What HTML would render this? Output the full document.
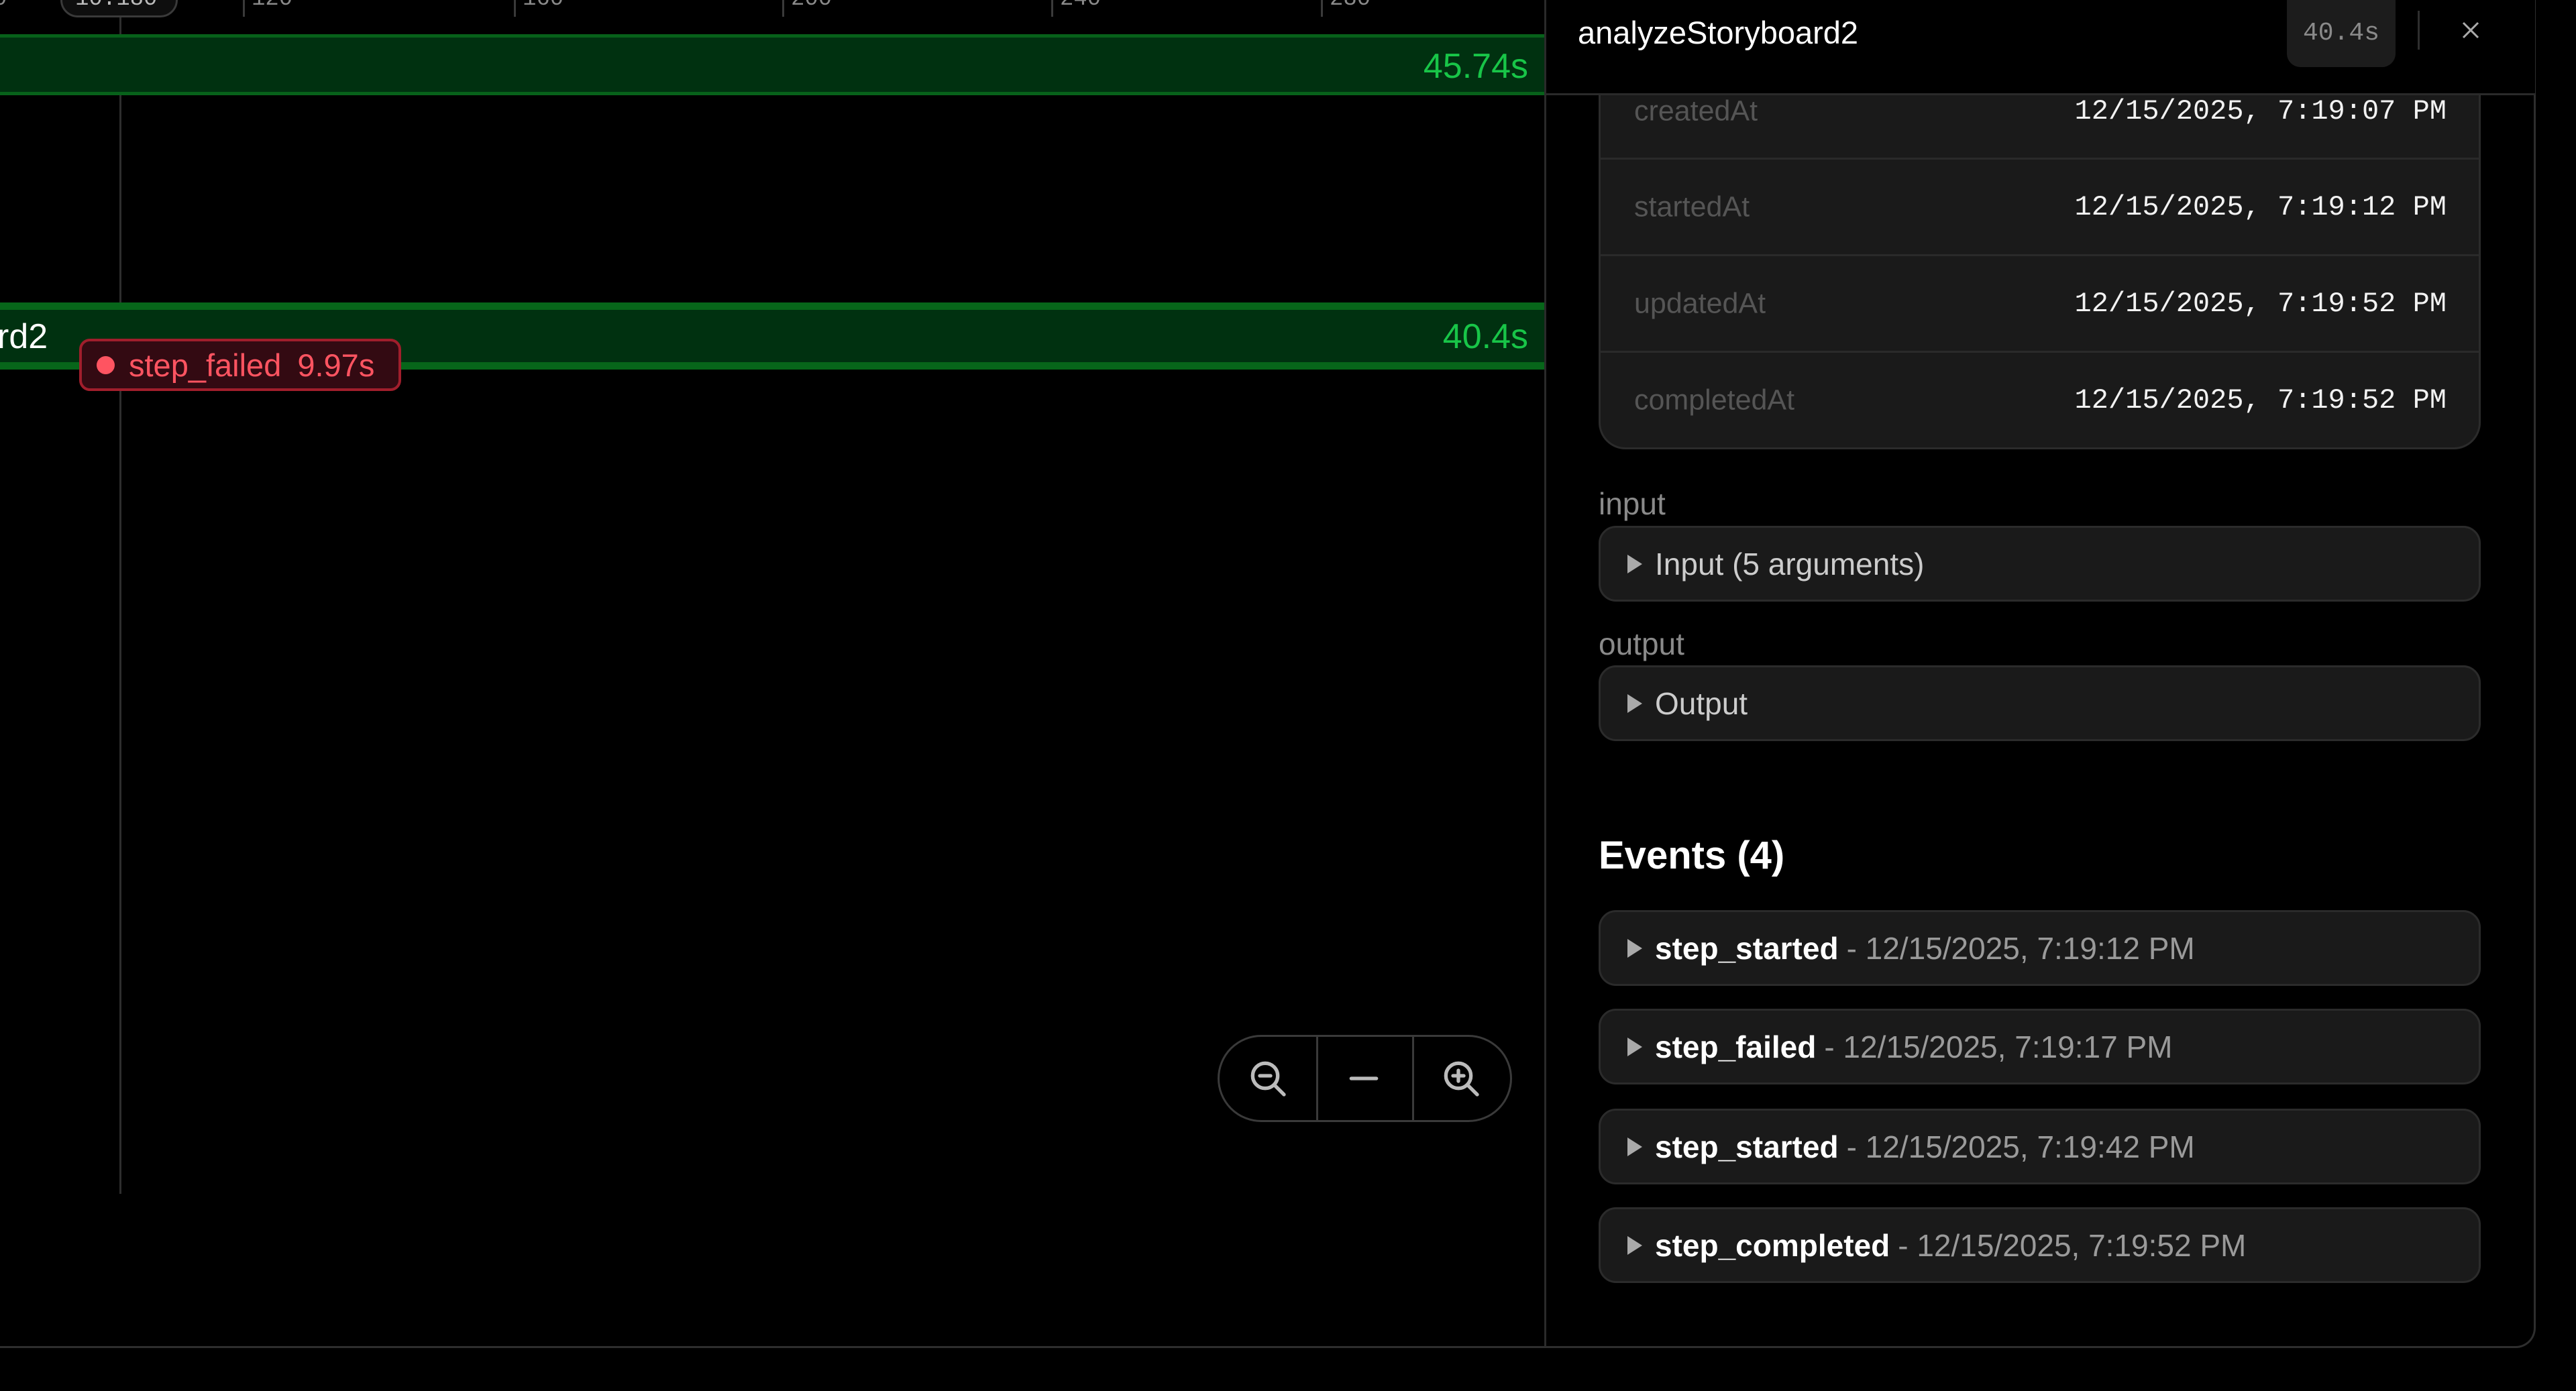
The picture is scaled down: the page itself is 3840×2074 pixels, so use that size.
<!DOCTYPE html>
<html><head><meta charset="utf-8"><style>
*{margin:0;padding:0;box-sizing:border-box}
body{width:3840px;height:2074px;background:#000;position:relative;overflow:hidden;font-family:"Liberation Sans",sans-serif;color:#fff}
.a{position:absolute}
.tick{position:absolute;top:0;width:3px;height:25px;background:#3a3a3a}
.tl{position:absolute;top:-20px;font-family:"Liberation Mono",monospace;font-size:34px;color:#8a8a8a}
.mono{font-family:"Liberation Mono",monospace}
.row{position:absolute;left:0;right:0;height:144px;border-top:3px solid #2a2a2a}
.row .k{position:absolute;left:50px;top:50%;transform:translateY(-50%);font-size:43px;color:#555}
.row .v{position:absolute;right:48px;top:50%;transform:translateY(-50%);font-family:"Liberation Mono",monospace;font-size:42px;color:#f2f2f2}
.box{position:absolute;left:2383px;width:1315px;height:113px;background:#1a1a1a;border:3px solid #2b2b2b;border-radius:26px;font-size:46px;display:flex;align-items:center;padding-left:40px}
.tri{width:0;height:0;border-top:14px solid transparent;border-bottom:14px solid transparent;border-left:22px solid #aaa;margin-right:19px}
.lbl{position:absolute;left:2383px;font-size:46px;color:#8a8a8a}
.ev b{font-weight:bold;color:#fff}
.ev span{color:#9a9a9a;margin-left:12px}
</style></head><body>
<!-- axis -->
<div class="tl" style="left:-10px">0</div>
<div class="tick" style="left:362px"></div><div class="tl" style="left:375px">120</div>
<div class="tick" style="left:766px"></div><div class="tl" style="left:779px">160</div>
<div class="tick" style="left:1166px"></div><div class="tl" style="left:1179px">200</div>
<div class="tick" style="left:1567px"></div><div class="tl" style="left:1580px">240</div>
<div class="tick" style="left:1969px"></div><div class="tl" style="left:1982px">280</div>
<div class="a" style="left:90px;top:-30px;width:175px;height:56px;border:3px solid #3a3a3a;border-radius:26px;background:#0e0e0e"></div>
<div class="a mono" style="left:112px;top:-20px;font-size:34px;color:#bbb">10.180</div>
<div class="a" style="left:178px;top:26px;width:3px;height:1754px;background:#2e2e2e"></div>
<!-- bar1 -->
<div class="a" style="left:0;top:51px;width:2302px;height:91px;background:#003110;border-top:5px solid #07611a;border-bottom:5px solid #07611a"></div>
<div class="a" style="right:1562px;top:69px;font-size:52px;color:#18c548">45.74s</div>
<!-- bar2 -->
<div class="a" style="left:0;top:451px;width:2302px;height:100px;background:#003110;border-top:11px solid #07661a;border-bottom:11px solid #07661a"></div>
<div class="a" style="left:-4px;top:472px;font-size:52px;color:#fff">rd2</div>
<div class="a" style="right:1562px;top:472px;font-size:52px;color:#18c548">40.4s</div>
<div class="a" style="left:118px;top:505px;width:480px;height:78px;background:#330a12;border:4px solid #a01e2c;border-radius:16px;display:flex;align-items:center;padding-left:22px;font-size:47px;color:#ff5461">
<div style="width:27px;height:27px;border-radius:50%;background:#ff5461;margin-right:21px"></div>step_failed<span style="margin-left:24px">9.97s</span></div>
<!-- zoom controls -->
<div class="a" style="left:1815px;top:1543px;width:439px;height:130px;border:3px solid #3a3a3a;border-radius:65px">
<div class="a" style="left:144px;top:0;width:3px;height:124px;background:#3a3a3a"></div>
<div class="a" style="left:287px;top:0;width:3px;height:124px;background:#3a3a3a"></div>
<svg class="a" style="left:40px;top:30px" width="64" height="64" viewBox="0 0 24 24" fill="none" stroke="#bbb" stroke-width="2" stroke-linecap="round"><circle cx="10.5" cy="10.5" r="7"/><path d="M15.5 15.5L21 21M7.5 10.5h6"/></svg>
<svg class="a" style="left:183px;top:30px" width="64" height="64" viewBox="0 0 24 24" fill="none" stroke="#bbb" stroke-width="2" stroke-linecap="round"><path d="M5 12h14"/></svg>
<svg class="a" style="left:328px;top:30px" width="64" height="64" viewBox="0 0 24 24" fill="none" stroke="#bbb" stroke-width="2" stroke-linecap="round"><circle cx="10.5" cy="10.5" r="7"/><path d="M15.5 15.5L21 21M7.5 10.5h6M10.5 7.5v6"/></svg>
</div>
<!-- outer frame -->
<div class="a" style="left:-10px;top:-40px;width:3790px;height:2050px;border:3px solid #2e2e2e;border-top:none;border-left:none;border-bottom-right-radius:30px"></div>
<div class="a" style="left:2302px;top:0;width:3px;height:2008px;background:#2a2a2a"></div>
<!-- table card -->
<div class="a" style="left:2383px;top:60px;width:1315px;height:610px;background:#1a1a1a;border:3px solid #2b2b2b;border-top:none;border-radius:0 0 40px 40px;overflow:hidden">
<div class="row" style="top:34px;border-top:none"><div class="k">createdAt</div><div class="v">12/15/2025, 7:19:07 PM</div></div>
<div class="row" style="top:175px"><div class="k">startedAt</div><div class="v">12/15/2025, 7:19:12 PM</div></div>
<div class="row" style="top:319px"><div class="k">updatedAt</div><div class="v">12/15/2025, 7:19:52 PM</div></div>
<div class="row" style="top:463px"><div class="k">completedAt</div><div class="v">12/15/2025, 7:19:52 PM</div></div>
</div>
<!-- header -->
<div class="a" style="left:2305px;top:0;width:1474px;height:142px;background:#000;border-bottom:3px solid #2a2a2a;z-index:1"></div>
<div class="a" style="left:2352px;top:21px;font-size:47px;color:#fff;z-index:2">analyzeStoryboard2</div>
<div class="a mono" style="left:3409px;top:-20px;width:162px;height:120px;background:#1c1c1c;border-radius:20px;color:#8a8a8a;font-size:38px;text-align:center;padding-top:48px;z-index:2">40.4s</div>
<div class="a" style="left:3604px;top:16px;width:3px;height:58px;background:#2e2e2e;z-index:2"></div>
<svg class="a" style="left:3668px;top:30px;z-index:2" width="30" height="30" viewBox="0 0 30 30" stroke="#aaa" stroke-width="3"><path d="M4 4L26 26M26 4L4 26"/></svg>
<!-- input/output -->
<div class="lbl" style="top:724px">input</div>
<div class="box" style="top:784px"><div class="tri"></div><span style="color:#ccc">Input (5 arguments)</span></div>
<div class="lbl" style="top:933px">output</div>
<div class="box" style="top:992px"><div class="tri"></div><span style="color:#ccc">Output</span></div>
<div class="a" style="left:2383px;top:1242px;font-size:58px;font-weight:bold;color:#fff">Events (4)</div>
<div class="box ev" style="top:1357px"><div class="tri"></div><b>step_started</b><span>- 12/15/2025, 7:19:12 PM</span></div>
<div class="box ev" style="top:1504px"><div class="tri"></div><b>step_failed</b><span>- 12/15/2025, 7:19:17 PM</span></div>
<div class="box ev" style="top:1653px"><div class="tri"></div><b>step_started</b><span>- 12/15/2025, 7:19:42 PM</span></div>
<div class="box ev" style="top:1800px"><div class="tri"></div><b>step_completed</b><span>- 12/15/2025, 7:19:52 PM</span></div>
</body></html>
